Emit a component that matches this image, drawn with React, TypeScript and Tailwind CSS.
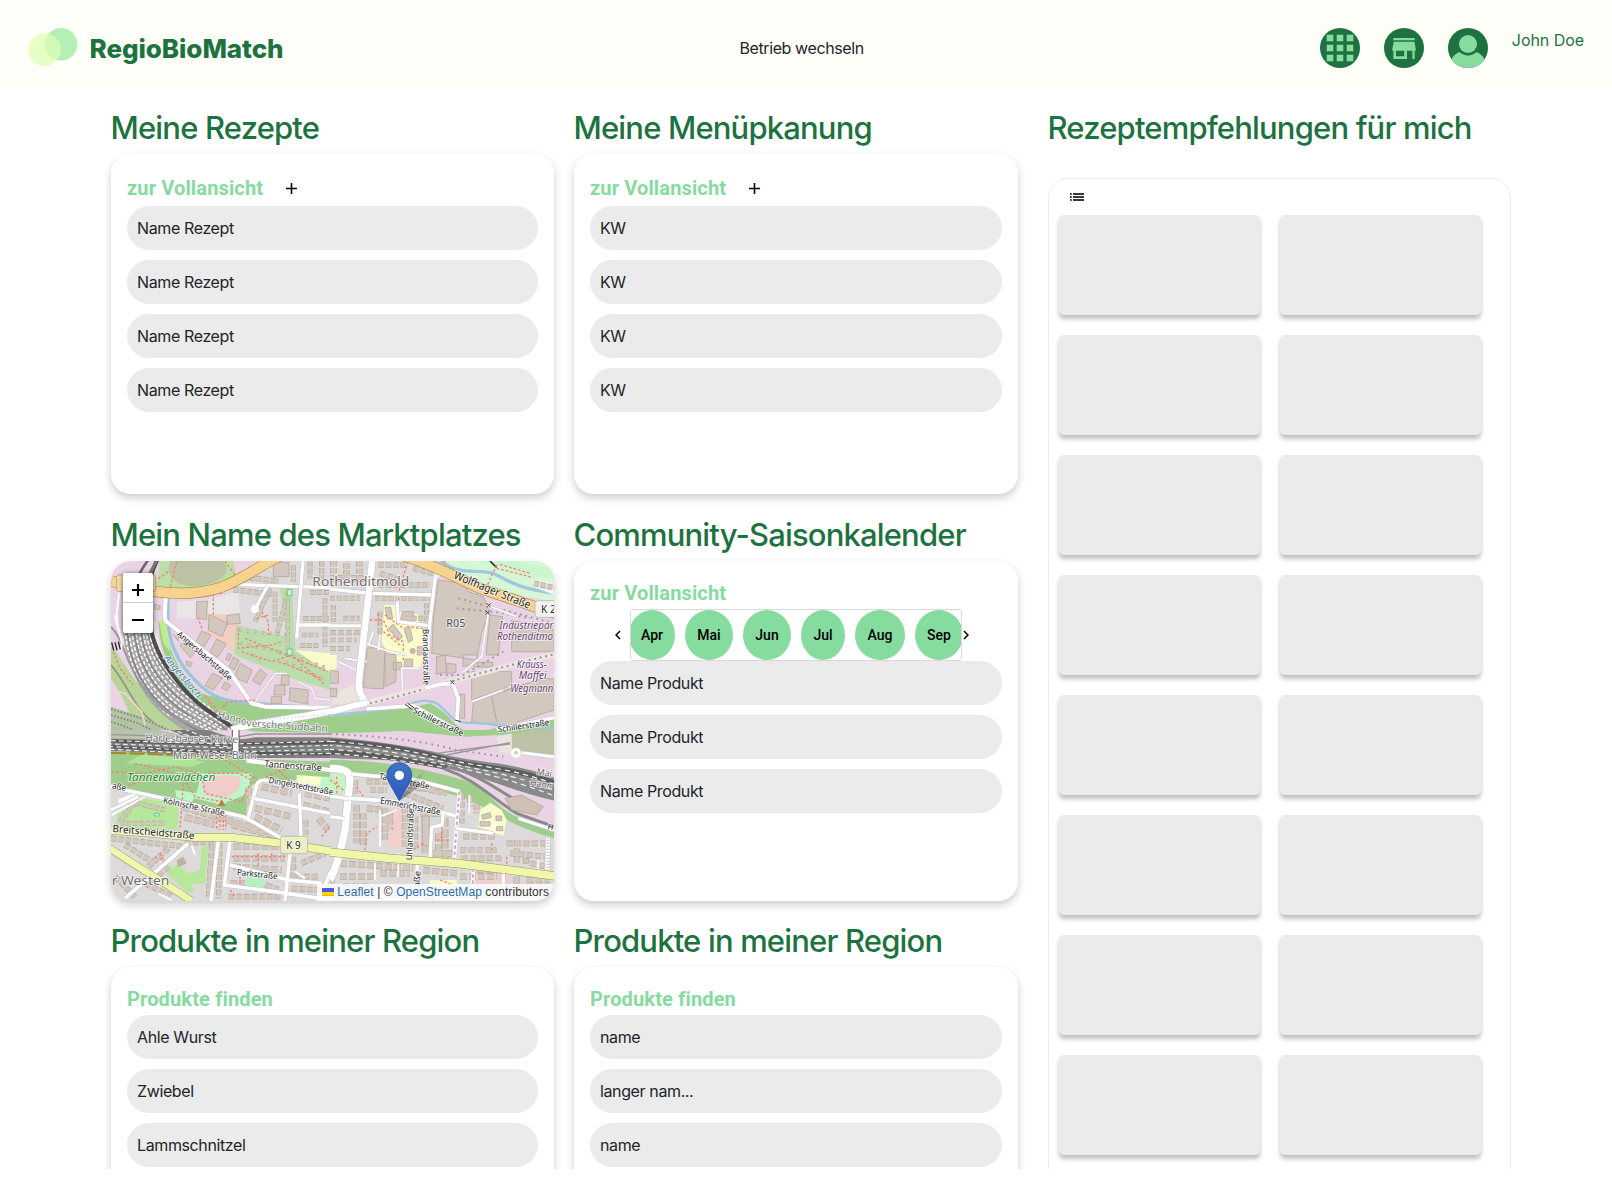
import React from "react";
import { MdAdd, MdChevronLeft, MdChevronRight } from "react-icons/md";

/* ---------- Map drawing ---------- */

const WOOD = "#9ecd8c";

function Road({ d, w = 12, fill = "#ffffff", edge = "#c4bfc4" }: { d: string; w?: number; fill?: string; edge?: string }) {
  return (
    <g fill="none" strokeLinejoin="round" strokeLinecap="butt">
      <path d={d} stroke={edge} strokeWidth={w + 3} />
      <path d={d} stroke={fill} strokeWidth={w} />
    </g>
  );
}

/* A street front: houses in a row along a line. */
function Houses({ d, w = 20, dash = "22 5" }: { d: string; w?: number; dash?: string }) {
  return (
    <g fill="none">
      <path d={d} stroke="#b7a697" strokeWidth={w} strokeDasharray={dash} />
      <path d={d} stroke="#d2c7bd" strokeWidth={w - 4} strokeDasharray={dash} />
    </g>
  );
}

function Halls({ d }: { d: string }) {
  return <path d={d} fill="#d2c8bf" stroke="#b7a697" strokeWidth={2.5} />;
}

function Foot({ d }: { d: string }) {
  return <path d={d} fill="none" stroke="#f5806f" strokeWidth={4} strokeDasharray="8 6" />;
}

type LabelProps = { x: number; y: number; r?: number; len?: number; s: number; c?: string; i?: boolean; children: string };
function Label({ x, y, r = 0, len, s, c = "#222222", i, children }: LabelProps) {
  return (
    <text
      transform={`translate(${x} ${y}) rotate(${r})`}
      fontSize={s * 1.06}
      fontStyle={i ? "italic" : "normal"}
      fill={c}
      stroke="#ffffff"
      strokeOpacity={0.75}
      strokeWidth={5}
      paintOrder="stroke"
      textLength={len}
      lengthAdjust="spacingAndGlyphs"
    >
      {children}
    </text>
  );
}

function NorthWest() {
  return (
    <g transform="translate(-18 -18)" clipPath="url(#nw)">
      <path d="M380 80L500 18H675V330L560 285L400 215L380 180Z" fill="#dcdadb" />
      <path d="M385 100L510 95L520 18H675V60L380 60Z" fill="#dcdadb" />
      <path d="M165 18H385L395 70L300 98L155 100Z" fill="#bbdfa5" />
      <path d="M195 18H355C392 55 330 92 270 94C212 94 180 62 195 18Z" fill="#bcc2a6" />
      <path d="M215 140L300 135L400 110L405 175L310 192L215 190Z" fill="#e9e7e6" />
      <path d="M305 178L405 178L385 292L360 270L310 240Z" fill="#f2cfc2" />
      <path d="M392 210L545 245L525 100H560L572 290L675 335V405L560 370L388 300Z" fill="#b9ddab" />
      <path d="M572 285L675 295V350L620 320Z" fill="#fbfdc9" />
      <path d="M160 200L178 205C190 300 235 370 300 420L460 450L675 458V540H430L300 470C220 400 165 310 160 200Z" fill={WOOD} />
      <path d="M162 195H182C186 235 190 262 196 290L175 265Z" fill="#bdf08a" />
      <path d="M190 130C180 240 205 320 290 395C340 440 390 440 450 445L675 462" fill="none" stroke="#9cc5da" strokeWidth={10} />
      <path d="M132 190L150 195C165 300 190 350 240 400L180 370C150 320 130 260 132 190Z" fill="#efe8e5" />
      <path d="M18 270L60 330C110 420 200 480 330 525H18Z" fill="#b6d596" />
      <path d="M18 330C80 400 90 490 190 525" fill="none" stroke="#8f8f8f" strokeWidth={5} />
      <path d="M18 370C50 420 70 460 80 500L18 470Z" fill="#e9d3e5" />
      <path d="M18 455L110 485L200 525H18Z" fill="#b4c3a3" />
      <path d="M18 462L110 490L190 525M18 480L100 505L140 525M18 500L80 522" fill="none" stroke="#7d8577" strokeWidth={5} strokeDasharray="5 5" />
      <path d="M100 175C92 280 135 385 205 445S300 500 360 535" fill="none" stroke="#a9a7a8" strokeWidth={92} />
      <g fill="none" stroke="#868686" strokeWidth={5}>
        <path d="M66 180C62 300 105 405 205 480S300 520 330 540" />
        <path d="M86 180C82 290 127 387 222 460S320 510 350 540" />
        <path d="M106 180C102 285 145 376 240 445S340 500 370 530" />
        <path d="M126 190C122 275 165 360 262 432S350 490 385 525" />
      </g>
      <g fill="none" stroke="#ffffff" strokeWidth={4.5} strokeDasharray="11 6">
        <path d="M60 180C56 300 99 410 200 488" strokeDashoffset={7} />
        <path d="M71 180C67 297 110 402 208 475L330 535" />
        <path d="M80 180C76 295 120 395 215 466L335 530" strokeDashoffset={5} />
        <path d="M91 180C87 290 131 385 226 455L345 525" strokeDashoffset={11} />
        <path d="M101 180C97 285 140 375 236 448L350 518" strokeDashoffset={3} />
        <path d="M112 180C108 280 151 367 247 440L360 510" strokeDashoffset={9} />
        <path d="M122 190C118 275 160 358 258 433L370 508" strokeDashoffset={1} />
        <path d="M133 205C130 275 170 350 265 424L380 505" strokeDashoffset={6} />
      </g>
      <path d="M165 0C110 90 115 240 195 350S320 470 400 530" fill="none" stroke="#4d4d4d" strokeWidth={12} />
      <path d="M140 0C80 80 70 130 72 190" fill="none" stroke="#6a6a6a" strokeWidth={8} />
      <path d="M155 18C110 90 112 130 118 190" fill="none" stroke="#777" strokeWidth={9} />
      <path d="M18 215C60 260 55 310 110 390S190 480 290 525" fill="none" stroke="#9a9a9a" strokeWidth={6} />
      <path d="M45 70C50 130 20 180 45 230M30 180C40 240 60 260 45 290" fill="none" stroke="#fff" strokeWidth={6} />
      <path d="M20 262L26 286M30 262L36 286M40 260L46 284" stroke="#222" strokeWidth={4} />
      <Foot d="M25 290L45 340L85 390" />
      <path d="M18 405L60 415L110 470L120 510" fill="none" stroke="#efd7c6" strokeWidth={5} />

      <Halls d="M275 140L308 138L304 194L274 190Z M312 178L368 205L352 245L310 225Z M365 182L402 176L406 205L366 208Z M505 22H552V65H505Z M290 228L318 240L298 274L272 262Z M335 252L364 268L338 306L314 292Z M225 270L240 260L270 292L255 308Z M322 355L352 368L325 405L300 392Z M405 325L442 345L425 384L388 366Z M465 342L485 358L464 390L442 376Z M530 360L552 362V390H528Z M556 398L610 405L608 447L552 436Z M360 380L378 392L365 408L350 398Z M385 306L402 316L388 345L372 335Z M510 390H540V420H506Z M500 425H530V445H498Z M370 295L380 300L372 318L362 312Z M245 318L262 324L256 335L244 330Z M148 148L165 152V163H148Z M205 240L222 240L220 258Z" />
      <Houses d="M385 104L500 118" w={16} dash="16 4" />
      <Houses d="M430 68L520 78" w={16} dash="18 4" />
      <Houses d="M495 100L450 200M510 110L510 205M545 130L515 240" w={14} dash="15 4" />
      <Houses d="M565 30V80M615 20V70M650 18V75" w={15} dash="17 4" />
      <Houses d="M615 112H675M595 190H675M590 240H640M585 272H640M660 130V275" w={14} dash="16 4" />
      <Houses d="M400 225L550 240M405 265L500 285M520 290L670 340M540 320L660 375M440 300L480 320" w={10} dash="9 14" />
      <Houses d="M548 90V290" w={12} dash="14 6" />
      <Foot d="M400 220V280L500 270L530 260M410 290L500 320L560 300L660 390M420 250L520 290L670 350M520 320L650 370" />
      <Foot d="M325 180V115H360M290 220L280 190M470 170L490 200V240M455 190L490 180M160 70L190 50M215 20L190 120M360 18L390 60" />
      <path d="M547 104h14v18h-14zM547 282h14v18h-14z" fill="#c7f4d0" stroke="#6ecb88" strokeWidth={3} />
      <path d="M450 440L510 355L545 355M580 380L620 400L630 430L675 435" fill="none" stroke="#c9c4c9" strokeWidth={7} />
      <path d="M450 440L510 355L545 355M580 380L620 400L630 430L675 435" fill="none" stroke="#fff" strokeWidth={4} />

      <Road d="M184 110C180 150 178 190 182 198L370 345L440 445L480 455L675 458" w={12} />
      <Road d="M385 88L675 98" w={10} />
      <Road d="M488 92L450 162" w={9} />
      <circle cx={450} cy={162} r={12} fill="#fff" />
      <Road d="M594 18L575 250M582 210H675" w={10} />
      <Road d="M20 78L60 92C190 125 280 118 345 98C410 75 450 40 530 0" w={30} fill="#f7d38f" edge="#a57a2e" />
      <rect x={35} y={60} width={117} height={50} rx={7} fill="#f5dfae" stroke="#b0935a" strokeWidth={2} />
      <path d="M380 525C440 500 560 495 680 468" fill="none" stroke="#c4bfc4" strokeWidth={24} />
      <path d="M380 525C440 500 560 495 680 468" fill="none" stroke="#fff" strokeWidth={20} />
      <path d="M385 510C440 492 540 490 675 478" fill="none" stroke="#b7b7b7" strokeWidth={3} strokeDasharray="3 8" />
      <Foot d="M300 420L340 470L370 440L450 435M330 470L310 440" />
    </g>
  );
}

function NorthEast() {
  return (
    <g transform="translate(657 -18)" clipPath="url(#ne)">
      <path d="M0 18H330L300 260L210 310L0 290Z" fill="#dcdadb" />
      <path d="M0 290L90 255L80 310L0 345Z" fill="#dcdadb" />
      <path d="M340 18H640L672 50V140L560 120L440 80Z" fill="#d6f7d5" />
      <path d="M163 150H205V170L265 178V215L300 222L285 290L270 338H215L205 350L155 262Z" fill="#fafccb" />
      <path d="M0 300H20V340L0 350Z" fill="#fafccb" />
      <path d="M30 405L70 390L100 440L0 450Z" fill="#eae5dd" />
      <path d="M0 486C70 478 160 465 230 460L300 445L340 470L380 510L420 540H0Z" fill={WOOD} />
      <path d="M470 525L672 485V525Z" fill={WOOD} />
      <path d="M440 18L510 40L530 50L672 70V45L560 18Z" fill="#c9f5cf" />
      <path d="M330 18C400 65 430 40 490 55C540 80 560 100 675 115" fill="none" stroke="#9fc9da" strokeWidth={10} />
      <path d="M480 18L500 38" stroke="#333" strokeWidth={5} />

      <Halls d="M325 75L400 85L415 110L460 125L478 170L455 235L440 315L305 295L310 190Z M480 180L518 185L505 300L468 300Z M545 195L672 225V290L545 290Z M425 350L545 350V385L520 402L425 435Z M430 440L560 395L640 370L672 372V465L520 515L425 500Z M112 278L165 280L160 402L100 398Z M165 295L198 300V380L165 395Z M320 305L345 300L350 352L318 358Z M350 325L378 328V352L350 355Z M398 335L440 325L442 300L400 300Z M165 158L182 156L188 192L172 192Z M218 170H250V195H212Z M222 220L240 218L248 255L235 262Z M175 220L190 208L218 245L205 258Z M225 312H248V335H222Z M190 322H215V345H190Z M262 275H278V300H262Z M430 322H488V336H430Z M388 418H404V490H388Z M0 345L25 350V385H0Z M0 400H20V425H0Z" />
      <circle cx={248} cy={288} r={9} fill="#c8b8a8" />
      <path d="M430 440L560 395M485 425L500 500" stroke="#b7a697" strokeWidth={3} fill="none" />
      <Houses d="M10 18V60M50 25L48 75M88 20V75M0 70H100" w={20} dash="16 5" />
      <Houses d="M145 30H230M150 55L210 75M250 40L310 55M145 90H300" w={17} dash="17 5" />
      <Houses d="M135 130H200M215 130H300M290 145V215M0 130L90 130M10 150V200M40 190H90M225 190H290" w={15} dash="15 5" />
      <Houses d="M0 232H90M0 255H80M0 280H60M150 170V240" w={14} dash="18 6" />
      <Foot d="M235 20L210 90L205 140M120 195H160L180 240L220 260V320M145 175V210M165 180L220 220M230 215L290 222M160 230L210 270" />
      <Foot d="M500 30L470 95M500 40L610 68M510 28L600 55M345 18L340 30" />
      <path d="M100 445C250 415 450 350 672 298" fill="none" stroke="#ece6e3" strokeWidth={18} />
      <path d="M120 445C250 415 450 350 672 298" fill="none" stroke="#9a9299" strokeWidth={6} strokeDasharray="6 11" />
      <path d="M385 130L460 150M380 160L500 172L600 190M520 165L672 205M330 360L400 360L520 290" fill="none" stroke="#a79ba5" strokeWidth={6} strokeDasharray="6 11" />
      <path d="M105 265L180 290L230 300M130 230L115 270M150 240L145 285M215 340L218 405M215 340H270M45 310L110 320M25 320L90 350M475 175L455 305L400 350M470 150L560 185M425 440L520 405" fill="none" stroke="#c9c4c9" strokeWidth={8} />
      <path d="M105 265L180 290L230 300M130 230L115 270M150 240L145 285M215 340L218 405M215 340H270M45 310L110 320M25 320L90 350M475 175L455 305L400 350M470 150L560 185M425 440L520 405" fill="none" stroke="#fff" strokeWidth={5} />

      <path d="M0 482C80 470 150 470 225 455C270 430 300 435 320 445C350 465 365 500 400 502L672 520" fill="none" stroke="#9dc7dc" strokeWidth={7} />
      <Road d="M0 102L120 115L310 120" w={10} />
      <Road d="M0 212H95" w={9} />
      <Road d="M202 140L205 200L295 212" w={10} />
      <Road d="M318 50L300 200L283 390" w={10} />
      <Road d="M318 65L345 50" w={9} />
      <Road d="M128 0C118 120 100 240 90 350C80 400 90 420 112 450" w={20} />
      <Road d="M0 470C50 460 90 445 112 445" w={18} />
      <Road d="M285 400L330 388L368 385L385 430L380 505" w={11} />
      <Road d="M110 462L250 452L380 525" w={11} />
      <Road d="M500 525L672 488" w={10} />
      <Road d="M215 0C330 35 380 70 450 100L615 155L690 180" w={30} fill="#f7d38f" edge="#a57a2e" />
      <path d="M610 75L672 85V120L610 95Z" fill="#f6f4f2" />
      <Houses d="M612 85L672 98" w={17} dash="16 4" />
      <path d="M225 448L245 462M233 445L253 459M375 495L392 500" stroke="#333" strokeWidth={3} />
      <path d="M470 145l12 12m0-12l-12 12M467 167l12 12m0-12l-12 12M361 376l12 12m0-12l-12 12" stroke="#444" strokeWidth={3} />
      <path d="M615 145Q615 137 625 137H700V187H625Q615 187 615 177Z" fill="#f1f1ef" stroke="#b0b0ae" strokeWidth={2} />
    </g>
  );
}

function SouthWest() {
  return (
    <g transform="translate(-18 507)" clipPath="url(#sw)">
      <path d="M18 175L200 200L360 240L420 140L675 90V513H18Z" fill="#dcdadb" />
      <path d="M18 0H160L300 28H18Z" fill="#b9c3ad" />
      <path d="M430 0H675V10L440 4Z" fill={WOOD} />
      <path d="M18 62L380 85L675 95V150H480L440 165L420 260L330 245L180 210L18 170Z" fill={WOOD} />
      <path d="M290 130H440L430 190L350 225L270 205Z" fill="#bff5cb" />
      <path d="M120 70L300 95L260 110L60 100Z" fill="#aee59b" />
      <path d="M210 180L280 190L260 215L215 205Z" fill="#bff5cb" />
      <path d="M300 150C330 132 385 135 405 142C412 175 385 205 340 202C300 200 280 178 300 150Z" fill="#f1cccb" />
      <path d="M365 215L420 205L425 262L362 250Z" fill={WOOD} />
      <path d="M100 200L220 225V300L30 290L40 250Z" fill="#b7e79b" />
      <path d="M290 345L310 350L300 460L240 465L190 440L215 400L250 430L285 420Z" fill="#b7e79b" />
      <path d="M190 400L270 480L250 490L185 430Z" fill="#b7e79b" />
      <path d="M575 135L652 140V168L575 160Z" fill="#fafccb" />
      <path d="M650 140H675V190H640Z" fill="#bff5cb" />
      <path d="M425 440H475V472H425Z" fill="#b4f2c0" />

      <path d="M18 26L380 34L450 22L675 22V84L400 84L18 62Z" fill="#808080" />
      <path d="M150 -30C250 0 300 50 420 62" fill="none" stroke="#747474" strokeWidth={26} />
      <path d="M230 -30C300 20 380 40 480 50" fill="none" stroke="#808080" strokeWidth={26} />
      <path d="M18 50L380 68L675 72M18 33L380 42L675 38" fill="none" stroke="#585858" strokeWidth={9} />
      <g fill="none" stroke="#ededed" strokeWidth={3.5} strokeDasharray="14 10">
        <path d="M18 32L380 42L675 34" />
        <path d="M18 42L380 54L675 46" strokeDashoffset={12} />
        <path d="M18 50L380 66L675 58" strokeDashoffset={8} />
        <path d="M18 58L380 76L675 70" strokeDashoffset={3} />
        <path d="M150 -20C250 10 300 50 380 50" />
        <path d="M200 -20C290 20 330 36 400 44" strokeDashoffset={6} />
      </g>
      <path d="M18 14L380 24L450 12L675 12" fill="none" stroke="#999" strokeWidth={4} />
      <path d="M18 68L380 80" fill="none" stroke="#a98524" strokeWidth={6} strokeDasharray="46 9" />
      <path d="M382 -10H402V85H382Z" fill="#fff" stroke="#555" strokeWidth={3} />

      <Houses d="M45 275L90 218L180 240M45 280H180" w={15} dash="14 5" />
      <Houses d="M235 232L500 310M240 262L330 285M380 285L520 320" w={20} dash="22 5" />
      <Houses d="M430 175V230M470 170L560 190M450 235L560 260M450 260L530 300M600 190L675 205M595 225L670 245M600 270V315M640 265L670 300" w={20} dash="22 7" />
      <Houses d="M18 325L240 350M60 345L150 400M190 355L130 410M190 410L130 460" w={17} dash="17 5" />
      <Houses d="M320 345L310 505M345 340L340 505M240 340L330 335" w={16} dash="18 5" />
      <Houses d="M385 350H530M385 385H540M385 410L530 420M375 460H420M480 465L520 480" w={19} dash="22 6" />
      <Houses d="M565 380V440H640M590 400L660 370M560 475L640 480M30 440L90 500M100 450L200 500M370 500H530" w={17} dash="18 5" />
      <path d="M215 390L235 380L245 400L220 412Z" fill="#beb0a3" />
      <Foot d="M20 125L120 130L210 110L290 135L300 190L410 215L440 150L400 130H300M30 180L120 150L240 150L270 200L350 215M90 100L250 140M360 90L460 150L560 110M500 100L560 160" />
      <Foot d="M235 160L225 300M335 260V300M345 255V300M355 255V300M362 240V300M150 380L190 400M165 370L180 400M460 370V410M500 370V390M380 380H540M405 440V480M375 480L390 500M70 225L110 205M650 320L675 290" />
      <path d="M147 250h16v8h-16z" fill="#c7f4d0" stroke="#6ecb88" strokeWidth={3} />
      <path d="M20 255L120 200M260 345L270 375M570 425L600 445M160 490L200 510" fill="none" stroke="#fff" strokeWidth={6} />
      <path d="M40 215L100 190" fill="none" stroke="#fff" strokeWidth={12} />

      <Road d="M0 165L60 180L200 210L330 240L420 262L530 325" w={11} />
      <Road d="M18 240L100 200" w={9} />
      <Road d="M430 262L455 165Q460 150 480 150L675 195" w={11} />
      <Road d="M445 205L675 250M583 190L588 320" w={10} />
      <Road d="M425 92L675 120" w={12} />
      <Road d="M250 340L60 505" w={11} />
      <Road d="M340 330L318 513M375 330L358 465L545 490L675 510M375 405L550 450L650 460M555 370L540 513M690 395L640 513" w={11} />
      <Road d="M0 345C80 400 150 440 260 513" w={20} fill="#f0f7ab" edge="#8f9c50" />
      <Road d="M0 300L120 308L270 322L380 322L530 340L690 365" w={22} fill="#f0f7ab" edge="#8f9c50" />
      <path d="M350 208L362 228H338Z" fill="#c07f45" />
      <rect x={526} y={319} width={82} height={52} rx={7} fill="#eaf0c4" stroke="#a9ad84" strokeWidth={2} />
    </g>
  );
}

function SouthEast() {
  return (
    <g transform="translate(657 507)" clipPath="url(#se)">
      <path d="M0 90L300 130L400 180L520 230L672 310V513H0Z" fill="#dcdadb" />
      <path d="M0 0H260L150 6L0 10Z M200 0L672 0V8L400 20Z" fill={WOOD} />
      <path d="M545 15L600 0H672V80L545 70Z" fill="#bcc2a6" />
      <path d="M500 20L545 10V75L510 65Z" fill="#ece5dd" />
      <path d="M0 90C150 90 280 115 400 150C480 175 490 230 560 260L672 300V325C580 300 520 265 430 215C370 190 250 160 0 125Z" fill={WOOD} />
      <path d="M0 135L45 130V195L0 190Z" fill="#c7f3c4" />
      <path d="M445 290L450 240L480 218L515 240L530 270L520 318Z" fill="#fafccb" />
      <path d="M190 240H218V350H175Z" fill="#f3cfcb" />
      <path d="M430 430H540V460H430Z" fill="#f3cfcb" />
      <path d="M300 450H380V470H300Z" fill="#fafccb" />

      <path d="M0 22C120 30 250 50 350 75S560 95 690 150V215C560 190 480 145 350 115S120 90 0 84Z" fill="#8a8a8a" />
      <path d="M0 34C130 40 250 60 350 88S560 110 690 165M0 66C130 72 250 92 350 112" fill="none" stroke="#5c5c5c" strokeWidth={15} />
      <g fill="none" stroke="#f0f0f0" strokeWidth={3.5} strokeDasharray="16 12">
        <path d="M0 34C130 42 250 64 350 88S560 114 690 170" />
        <path d="M0 46C130 54 250 76 350 98S560 134 690 188" strokeDashoffset={9} />
        <path d="M0 58C130 66 250 86 350 106S560 152 690 205" strokeDashoffset={4} />
        <path d="M0 70C130 78 250 98 340 112" strokeDashoffset={13} />
      </g>
      <path d="M320 70L450 52L540 42M350 75L540 38" fill="none" stroke="#999" strokeWidth={4} />
      <path d="M340 115C440 150 480 200 560 250L672 290M360 110C460 140 500 180 600 235" fill="none" stroke="#8a8a8a" strokeWidth={9} />
      <path d="M0 12C150 18 280 32 380 60L520 80" fill="none" stroke="#9c949b" strokeWidth={6} strokeDasharray="5 13" />
      <path d="M525 205L575 195L640 230L620 255L545 240Z" fill="#cfc0b5" stroke="#b09c8c" strokeWidth={2} />

      <Houses d="M75 150V195M110 155H180M120 180H170M230 165L350 190M225 190L340 235M260 175H320" w={17} dash="18 5" />
      <Houses d="M80 225V340M110 235L160 240M100 250V345M165 235V330M180 240V300M225 230V350M255 260V360" w={19} dash="20 5" />
      <Houses d="M285 250V370M345 265V385M270 250H330M310 370H370M325 310V380" w={20} dash="26 6" />
      <Houses d="M395 190V280M420 200V230M440 220V250M400 320H500M390 360H500M395 385H520M560 330V400M530 340H650M540 370L650 380M600 400L650 410" w={17} dash="19 6" />
      <Houses d="M30 400L250 415M30 440H130M40 470H120M150 430H240M280 420L380 430M390 440H500M440 420H520M560 440V500M590 450H660M300 470V510M0 440L20 500" w={19} dash="21 6" />
      <Halls d="M276 258L298 258V350L278 345Z M455 255L480 248L484 262L458 268Z M498 258H515V272H498Z M450 275H480V288H450Z M500 290H518V302H500Z M580 385H596V400H580Z" />
      <Foot d="M105 360L110 310L140 290M80 170L100 200M20 140V190M0 150L40 180M250 360L280 340M320 330H360M335 290V330M485 340V370M530 380V410M330 450L380 470M60 480H110" />
      <path d="M150 240V350M148 260L200 240M418 195V250M490 260V310M205 370V440M135 400V450M625 390V420" fill="none" stroke="#fff" strokeWidth={5} />

      <Road d="M0 115Q60 115 60 145L45 300Q25 400 0 450" w={22} />
      <Road d="M65 132L260 150L390 185" w={11} />
      <Road d="M60 205L200 215L330 245L378 258" w={11} />
      <Road d="M0 260L45 266M0 198L55 206" w={10} />
      <path d="M388 185L372 390M430 415L428 470" fill="none" stroke="#fff" strokeWidth={11} />
      <path d="M388 185L372 390M430 415L428 470" fill="none" stroke="#c9a9c9" strokeWidth={6} strokeDasharray="10 8" />
      <Road d="M378 295L490 310" w={10} />
      <Road d="M340 250L336 285L305 292L300 385" w={10} />
      <Road d="M248 215L240 385M262 400L258 480M520 420V470" w={10} />
      <Road d="M654 320L652 440" w={13} />
      <path d="M654 320V430" stroke="#c4bfc4" strokeWidth={10} strokeDasharray="3 6" />
      <Road d="M565 265L672 300M575 68L672 80" w={9} />
      <circle cx={558} cy={68} r={15} fill="#fff" />
      <circle cx={558} cy={68} r={6} fill="#bcdcab" />
      <Road d="M-15 365L180 385L380 400L690 440" w={23} fill="#f0f7ab" edge="#8f9c50" />
    </g>
  );
}

function StreetMap() {
  return (
    <svg viewBox="0 0 1329 1020" className="block h-[340px] w-[443px]" style={{ fontFamily: '"Noto Sans", "Open Sans", sans-serif' }}>
      <defs>
        <clipPath id="nw"><rect x={18} y={18} width={658} height={508} /></clipPath>
        <clipPath id="ne"><rect x={0} y={18} width={673} height={508} /></clipPath>
        <clipPath id="sw"><rect x={18} y={0} width={658} height={514} /></clipPath>
        <clipPath id="se"><rect x={0} y={0} width={673} height={514} /></clipPath>
        <linearGradient id="pin" x1="0" y1="0" x2="0" y2="1">
          <stop offset="0" stopColor="#3f74c6" />
          <stop offset="1" stopColor="#2d56bd" />
        </linearGradient>
        <linearGradient id="pinShade" x1="0" y1="1" x2="1" y2="0">
          <stop offset="0" stopColor="#000" stopOpacity={0.45} />
          <stop offset="1" stopColor="#000" stopOpacity={0} />
        </linearGradient>
      </defs>
      <rect width={1329} height={1020} fill="#e9d3e5" />
      <NorthWest />
      <NorthEast />
      <SouthWest />
      <SouthEast />

      <Label x={604} y={76} len={291} s={38} c="#6f6f6f">Rothenditmold</Label>
      <Label x={1026} y={52} r={22} len={245} s={32}>Wolfhager Straße</Label>
      <Label x={1290} y={155} s={29}>K 2</Label>
      <Label x={1006} y={199} len={57} s={33} c="#4a4a4a">R05</Label>
      <Label x={1165} y={204} len={162} s={30} c="#6b4270" i>Industriepar</Label>
      <Label x={1158} y={238} len={168} s={30} c="#6b4270" i>Rothenditmo</Label>
      <Label x={1217} y={320} len={90} s={30} c="#6b4270" i>Krauss-</Label>
      <Label x={1223} y={355} len={84} s={30} c="#6b4270" i>Maffei</Label>
      <Label x={1198} y={392} len={129} s={30} c="#6b4270" i>Wegmann</Label>
      <Label x={935} y={204} r={89} len={168} s={24}>Brandaustraße</Label>
      <Label x={196} y={222} r={41} len={210} s={24}>Angersbachstraße</Label>
      <Label x={158} y={292} r={50} len={158} s={27} c="#4a7fb5" i>Angersbach</Label>
      <Label x={318} y={468} r={16} len={90} s={28} c="#777">Hanno</Label>
      <Label x={406} y={496} r={4} len={244} s={28} c="#777">versche Südbahn</Label>
      <Label x={904} y={454} r={26} len={165} s={24}>Schillerstraße</Label>
      <Label x={1162} y={514} r={-8} len={155} s={24}>Schillerstraße</Label>
      <Label x={103} y={541} r={1} len={278} s={28} c="#6c6c6c">Harleshäuser Kurve</Label>
      <Label x={186} y={593} len={250} s={28} c="#6c6c6c">Main-Weser-Bahn</Label>
      <Label x={48} y={660} len={265} s={32} c="#178a2c" i>Tannenwäldchen</Label>
      <Label x={460} y={618} r={4} len={172} s={27}>Tannenstraße</Label>
      <Label x={472} y={665} r={11} len={196} s={24}>Dingelstedtstraße</Label>
      <Label x={155} y={726} r={12} len={188} s={25}>Kölnische Straße</Label>
      <Label x={2} y={682} r={12} len={42} s={24}>aße</Label>
      <Label x={4} y={813} r={5} len={246} s={29}>Breitscheidstraße</Label>
      <Label x={526} y={864} len={43} s={28}>K 9</Label>
      <Label x={377} y={942} r={6} len={122} s={24}>Parkstraße</Label>
      <Label x={2} y={971} len={173} s={37} c="#6f6f6f">r Westen</Label>
      <Label x={803} y={653} r={12} len={154} s={24}>Tannenstraße</Label>
      <Label x={806} y={727} r={11} len={184} s={26}>Emmerichstraße</Label>
      <Label x={903} y={898} r={-88} len={155} s={24}>Uhlandstraße</Label>
      <Label x={926} y={990} r={-88} len={60} s={24}>raße</Label>
      <Label x={1276} y={640} r={10} s={25} c="#666">Mai</Label>
      <Label x={1256} y={672} r={10} s={25} c="#666">Hann</Label>
      <Label x={1309} y={805} r={10} s={22}>H</Label>

      <g transform="translate(657 507)">
        <path d="M208 212L250 150L285 120L262 175Z" fill="url(#pinShade)" />
        <path d="M208 212L180 163Q171 148 171 134A37 36 0 0 1 245 134Q245 148 236 163Z" fill="url(#pin)" stroke="#2c5da8" strokeWidth={3} />
        <circle cx={208} cy={136} r={14} fill="#fff" />
      </g>
    </svg>
  );
}

/* ---------- Page parts ---------- */

const headingClass = "-ml-[0.5px] text-[31px] leading-[29px] font-medium tracking-[-0.83px] whitespace-nowrap text-[#1d7340]";

function Section({ title, children }: { title: string; children: React.ReactNode }) {
  return (
    <section>
      <h2 className={`h-[41px] ${headingClass}`}>{title}</h2>
      <div className="h-[340px] overflow-hidden rounded-[20px] bg-white shadow-[0_4px_8px_rgba(0,0,0,0.2)]">{children}</div>
    </section>
  );
}

function Items({ names }: { names: string[] }) {
  return (
    <ul className="flex flex-col gap-2.5">
      {names.map((n, i) => (
        <li key={i} className="flex h-11 shrink-0 items-center rounded-[22px] bg-[#ebebeb] px-2.5 text-base tracking-[-0.38px] text-[#212529]">
          {n}
        </li>
      ))}
    </ul>
  );
}

const linkClass = "font-[Roboto] text-[20px] leading-6 font-bold tracking-[0.14px] text-[#86db9f]";

function ListCard({ name }: { name: string }) {
  return (
    <div className="px-4 pt-[22px]">
      <div className="flex h-[30px] items-start gap-[19px]">
        <a className={linkClass}>zur Vollansicht</a>
        <MdAdd className="mt-[2.5px] size-[19px] text-black" />
      </div>
      <Items names={[name, name, name, name]} />
    </div>
  );
}

function ProductCard({ names }: { names: string[] }) {
  return (
    <div className="px-4 pt-5">
      <div className="h-7">
        <a className={linkClass}>Produkte finden</a>
      </div>
      <Items names={names} />
    </div>
  );
}

const months: [string, string][] = [
  ["Apr", "w-[46px]"],
  ["Mai", "w-12"],
  ["Jun", "w-12"],
  ["Jul", "w-11"],
  ["Aug", "w-[50px]"],
  ["Sep", "w-12"],
];

function SeasonCard() {
  return (
    <div className="px-4 pt-5">
      <div className="h-7">
        <a className={linkClass}>zur Vollansicht</a>
      </div>
      <div className="flex items-center pl-[19px]">
        <MdChevronLeft className="size-[18px] text-black" />
        <div className="ml-[3px] flex h-[52px] w-[332px] overflow-hidden rounded-[3px] border border-[#d9d9d9]">
          <div className="-ml-[2px] flex shrink-0 gap-2.5">
            {months.map(([m, w]) => (
              <span key={m} className={`${w} flex h-[50px] shrink-0 items-center justify-center rounded-[50%] bg-[#86db9f] font-[Roboto] text-sm font-medium text-black`}>
                {m}
              </span>
            ))}
          </div>
        </div>
        <MdChevronRight className="-ml-[5px] size-[18px] text-black" />
      </div>
      <Items names={["Name Produkt", "Name Produkt", "Name Produkt"]} />
    </div>
  );
}

function MapCard() {
  return (
    <div className="relative h-full">
      <StreetMap />
      <div className="absolute top-3 left-3 w-[30px] overflow-hidden rounded-[2px] bg-white shadow-[0_1px_5px_rgba(0,0,0,0.65)]">
        <button className="flex h-[30px] w-full items-center justify-center border-b border-[#cccccc]">
          <svg viewBox="0 0 12 12" className="mt-1.5 size-3"><path d="M6 0V12M0 6H12" stroke="#000" strokeWidth={2.2} /></svg>
        </button>
        <button className="flex h-[30px] w-full items-center justify-center">
          <svg viewBox="0 0 12 12" className="mt-1 size-3"><path d="M0 6H12" stroke="#000" strokeWidth={2.2} /></svg>
        </button>
      </div>
      <div className="absolute right-0 bottom-0 flex h-[17px] items-center bg-white/80 px-[5px] font-['Liberation_Sans'] text-xs tracking-[0.08px] whitespace-pre text-[#333333]">
        <svg viewBox="0 0 12 8" className="mr-[3px] h-2 w-3">
          <path fill="#4c5ae0" d="M0 0h12v4H0z" />
          <path fill="#ffd500" d="M0 4h12v3H0z" />
          <path fill="#e0bc00" d="M0 7h12v1H0z" />
        </svg>
        <span className="text-[#2a6eaf]">Leaflet</span>
        <span> | © </span>
        <span className="text-[#2a6eaf]">OpenStreetMap</span>
        <span> contributors</span>
      </div>
    </div>
  );
}

function Header() {
  return (
    <header className="flex h-[88px] items-start bg-[#fefff8]">
      <div className="flex h-full w-[739.5px] shrink-0 items-start pt-[27px] pl-7">
        <svg viewBox="0 0 50 40" className="h-10 w-[50px] shrink-0">
          <circle cx={33} cy={17.2} r={16.3} fill="#b4efb4" />
          <circle cx={16.6} cy={22.7} r={16.3} fill="#dcffb4" fillOpacity={0.72} />
        </svg>
        <span className="ml-[11.5px] pt-1.5 text-[26px] leading-8 font-extrabold tracking-[-0.06px] text-[#1d7340]">RegioBioMatch</span>
      </div>
      <span className="pt-9 text-base tracking-[-0.4px] text-[#212529]">Betrieb wechseln</span>
      <div className="ml-auto flex items-start gap-6 pt-7 pr-7">
        <svg viewBox="0 0 40 40" className="size-10">
          <circle cx={20} cy={20} r={20} fill="#1d7340" />
          <path fill="#86db9f" d="M6.7 6.7h6.6v6.6H6.7zM16.7 6.7h6.6v6.6h-6.6zM26.7 6.7h6.6v6.6h-6.6zM6.7 16.7h6.6v6.6H6.7zM16.7 16.7h6.6v6.6h-6.6zM26.7 16.7h6.6v6.6h-6.6zM6.7 26.7h6.6v6.6H6.7zM16.7 26.7h6.6v6.6h-6.6zM26.7 26.7h6.6v6.6h-6.6z" />
        </svg>
        <svg viewBox="0 0 40 40" className="size-10">
          <circle cx={20} cy={20} r={20} fill="#1d7340" />
          <path fill="#86db9f" fillRule="evenodd" d="M9.4 10H30.6V12.2H9.4ZM9.8 13.8H30.4L32 22.6H30.6V31H28.4V22.8H23V31H9.4V22.6H8ZM12 22.8V28.2H20.2V22.8Z" />
        </svg>
        <svg viewBox="0 0 40 40" className="size-10 rounded-full">
          <rect width={40} height={40} fill="#1d7340" />
          <path fill="#86db9f" d="M3 32C5 28 8 25.5 11.5 24C16 28.5 24 28.5 28.5 24C32 25.5 35 28 37 32L34 40H6Z" />
          <circle cx={20} cy={16} r={9} fill="#86db9f" />
        </svg>
        <span className="text-base leading-6 tracking-[-0.06px] text-[#1d7340]">John Doe</span>
      </div>
    </header>
  );
}

export default function App() {
  return (
    <div className="h-[1178px] w-[1612px] overflow-hidden bg-white font-['Inter',sans-serif]">
      <Header />
      <main className="flex h-[1081px] items-start overflow-hidden pt-[25px] pl-[111px]">
        <div className="grid grid-cols-[443px_444px] gap-x-5 gap-y-[25.5px]">
          <Section title="Meine Rezepte"><ListCard name="Name Rezept" /></Section>
          <Section title="Meine Menüpkanung"><ListCard name="KW" /></Section>
          <Section title="Mein Name des Marktplatzes"><MapCard /></Section>
          <Section title="Community-Saisonkalender"><SeasonCard /></Section>
          <Section title="Produkte in meiner Region"><ProductCard names={["Ahle Wurst", "Zwiebel", "Lammschnitzel"]} /></Section>
          <Section title="Produkte in meiner Region"><ProductCard names={["name", "langer nam...", "name"]} /></Section>
        </div>
        <section className="ml-[30px] w-[463px]">
          <h2 className={`h-[65px] ${headingClass}`}>Rezeptempfehlungen für mich</h2>
          <div className="h-[1000px] rounded-t-[20px] border border-[#ededed] pl-2.5">
            <div className="h-9 pt-3.5 pl-[11px]">
              <svg viewBox="0 0 14 8" className="block h-2 w-3.5" fill="#3a3a3a">
                <path d="M0 0H1.7V2H0ZM0 3H1.7V5H0ZM0 6H1.7V8H0ZM3 0H14V2H3ZM3 3H14V5H3ZM3 6H14V8H3Z" />
              </svg>
            </div>
            <div className="grid grid-cols-[201px_201px] gap-x-5 gap-y-5">
              {Array.from({ length: 16 }, (_, i) => (
                <div key={i} className="h-[100px] rounded-[5px] bg-[#ebebeb] shadow-[0_4px_4px_rgba(0,0,0,0.25)]" />
              ))}
            </div>
          </div>
        </section>
      </main>
    </div>
  );
}
